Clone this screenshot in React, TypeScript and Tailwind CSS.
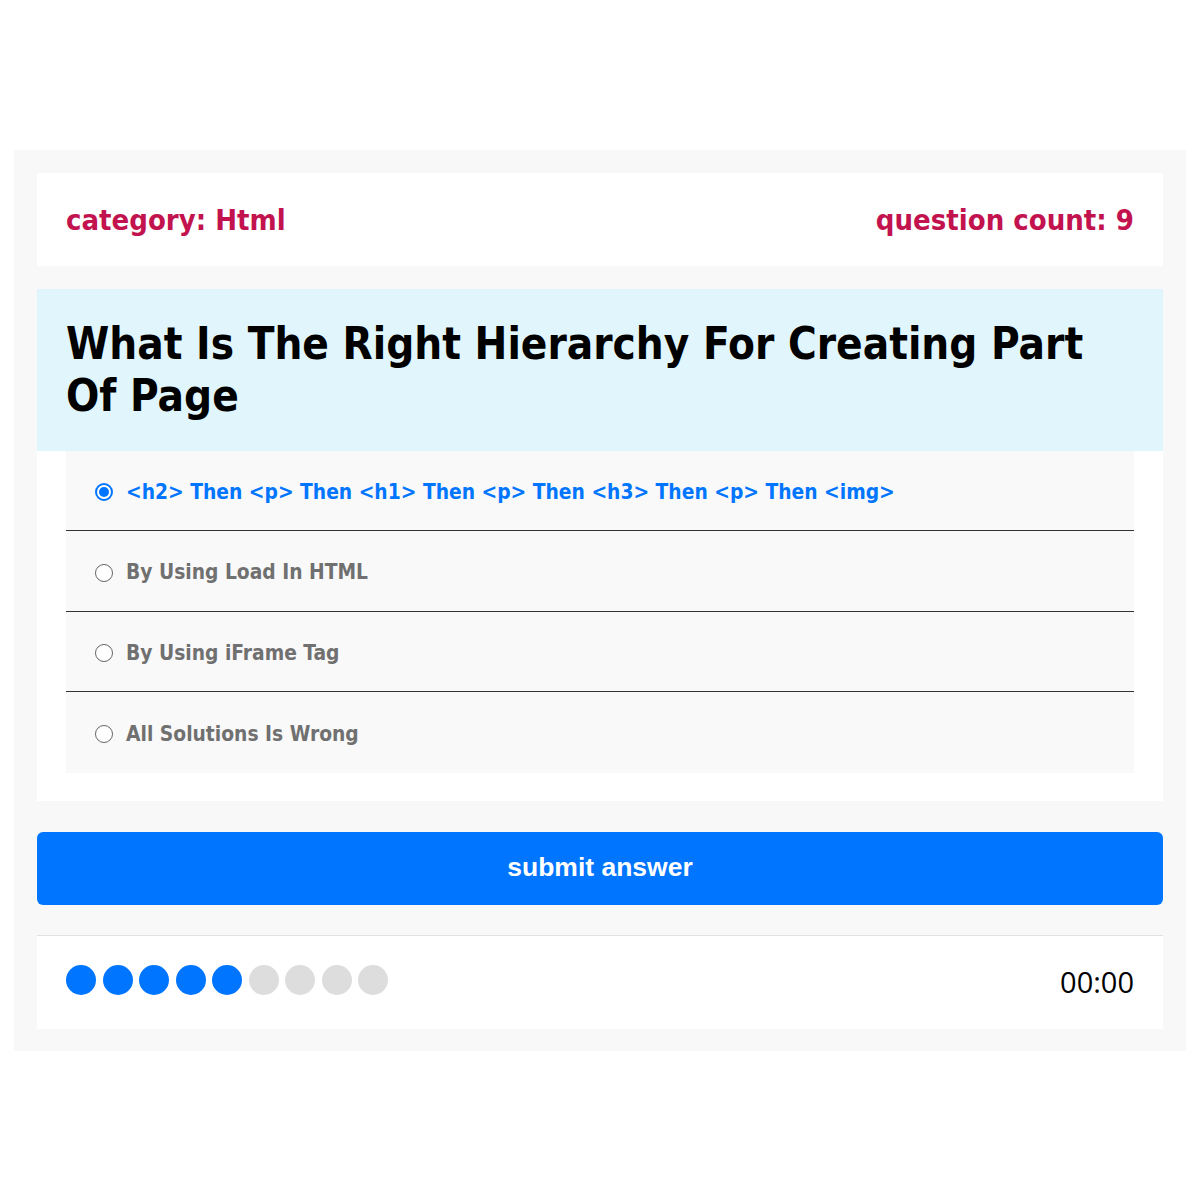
import React from "react";

const answers = [
  "<h2> Then <p> Then <h1> Then <p> Then <h3> Then <p> Then <img>",
  "By Using Load In HTML",
  "By Using iFrame Tag",
  "All Solutions Is Wrong",
];

export default function App() {
  const tahoma = { fontFamily: '"DejaVu Sans Condensed", "DejaVu Sans", sans-serif' };
  return (
    <div className="min-h-[1200px] flex items-center bg-white px-[14px]" style={tahoma}>
      <div className="w-full bg-[#f8f8f8] p-[23px] pb-[22px]">
        <div className="bg-white h-[93px] px-[29px] pt-[4px] flex items-center justify-between text-[29px] font-bold text-[#c2134f]">
          <span>category: Html</span>
          <span>question count: 9</span>
        </div>
        <div className="mt-[23px] bg-[#e1f5fd] px-[29px] py-[29px]">
          <h2 className="text-[43.6px] leading-[52px] font-bold text-black">
            What Is The Right Hierarchy For Creating Part Of Page
          </h2>
        </div>
        <div className="bg-white px-[29px] pb-[28px]">
          <div className="bg-[#f9f9f9]">
            {answers.map((a, i) => (
              <div
                key={i}
                className={`h-[80.5px] flex items-center pl-[29px] gap-[13px] pt-[4px] ${i < answers.length - 1 ? "border-b border-[#333]" : ""}`}
              >
                {i === 0 ? (
                  <span className="w-[18px] h-[18px] rounded-full border-[2px] border-[#0075ff] flex items-center justify-center bg-white">
                    <span className="w-[10px] h-[10px] rounded-full bg-[#0075ff]" />
                  </span>
                ) : (
                  <span className="w-[18px] h-[18px] rounded-full border-[1.5px] border-[#666] bg-white" />
                )}
                <span className={`text-[20.8px] font-bold ${i === 0 ? "text-[#0075ff]" : "text-[#707070]"}`}>{a}</span>
              </div>
            ))}
          </div>
        </div>
        <button
          className="mt-[31px] w-full h-[73px] rounded-[6px] bg-[#0075ff] text-white text-[26.5px] font-bold"
          style={{ fontFamily: '"Liberation Sans", Arial, sans-serif' }}
        >
          submit answer
        </button>
        <div className="mt-[30px] bg-white border-t border-[#e2e2e2] h-[94px] px-[29px] flex items-center justify-between">
          <div className="flex gap-[6.5px] -mt-[4px]">
            {Array.from({ length: 9 }).map((_, i) => (
              <span
                key={i}
                className={`w-[30px] h-[30px] rounded-full ${i < 5 ? "bg-[#0075ff]" : "bg-[#dddddd]"}`}
              />
            ))}
          </div>
          <span className="text-[29px] text-black" style={{ fontFamily: '"Open Sans", "Noto Sans", sans-serif' }}>
            00:00
          </span>
        </div>
      </div>
    </div>
  );
}
